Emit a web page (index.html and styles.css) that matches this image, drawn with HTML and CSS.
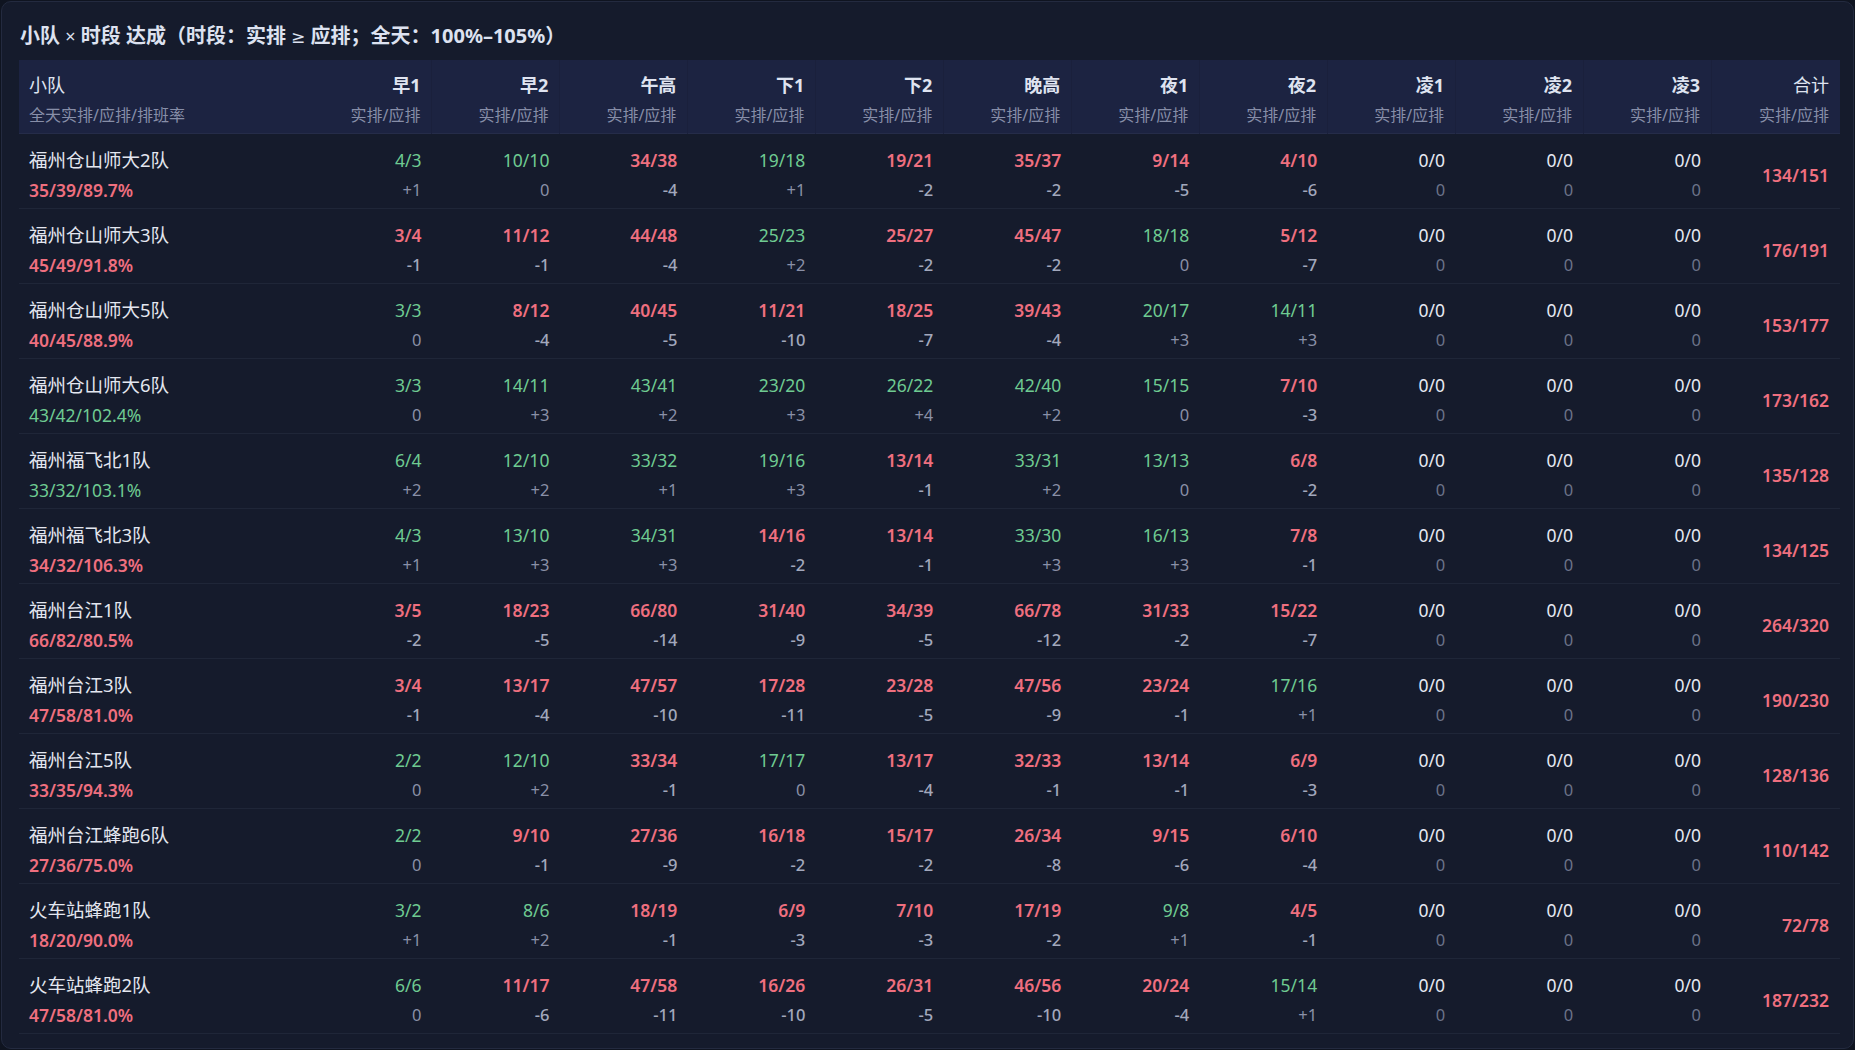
FILE: index.html
```html
<!DOCTYPE html>
<html lang="zh-CN">
<head>
<meta charset="utf-8">
<title>小队 × 时段 达成</title>
<link rel="stylesheet" href="styles.css">
</head>
<body>
<div class="card">
  <h1 class="title">小队 <span class="x">×</span> 时段 达成（时段：实排 <span class="sym">≥</span> 应排；全天：100%–105%）</h1>
  <div class="grid">
    <div class="row head">
      <div class="cell name"><div class="h1n">小队</div><div class="h2">全天实排/应排/排班率</div></div>
      <div class="cell"><div class="h1">早1</div><div class="h2">实排/应排</div></div>
      <div class="cell"><div class="h1">早2</div><div class="h2">实排/应排</div></div>
      <div class="cell"><div class="h1">午高</div><div class="h2">实排/应排</div></div>
      <div class="cell"><div class="h1">下1</div><div class="h2">实排/应排</div></div>
      <div class="cell"><div class="h1">下2</div><div class="h2">实排/应排</div></div>
      <div class="cell"><div class="h1">晚高</div><div class="h2">实排/应排</div></div>
      <div class="cell"><div class="h1">夜1</div><div class="h2">实排/应排</div></div>
      <div class="cell"><div class="h1">夜2</div><div class="h2">实排/应排</div></div>
      <div class="cell"><div class="h1">凌1</div><div class="h2">实排/应排</div></div>
      <div class="cell"><div class="h1">凌2</div><div class="h2">实排/应排</div></div>
      <div class="cell"><div class="h1">凌3</div><div class="h2">实排/应排</div></div>
      <div class="cell"><div class="h1n">合计</div><div class="h2">实排/应排</div></div>
    </div>

    <div class="row">
      <div class="cell name"><div class="n">福州仓山师大2队</div><div class="s r">35/39/89.7%</div></div>
      <div class="cell"><div class="v g">4/3</div><div class="d p">+1</div></div>
      <div class="cell"><div class="v g">10/10</div><div class="d p">0</div></div>
      <div class="cell"><div class="v r">34/38</div><div class="d m">-4</div></div>
      <div class="cell"><div class="v g">19/18</div><div class="d p">+1</div></div>
      <div class="cell"><div class="v r">19/21</div><div class="d m">-2</div></div>
      <div class="cell"><div class="v r">35/37</div><div class="d m">-2</div></div>
      <div class="cell"><div class="v r">9/14</div><div class="d m">-5</div></div>
      <div class="cell"><div class="v r">4/10</div><div class="d m">-6</div></div>
      <div class="cell"><div class="v w">0/0</div><div class="d z">0</div></div>
      <div class="cell"><div class="v w">0/0</div><div class="d z">0</div></div>
      <div class="cell"><div class="v w">0/0</div><div class="d z">0</div></div>
      <div class="cell total"><div class="v r">134/151</div></div>
    </div>

    <div class="row">
      <div class="cell name"><div class="n">福州仓山师大3队</div><div class="s r">45/49/91.8%</div></div>
      <div class="cell"><div class="v r">3/4</div><div class="d m">-1</div></div>
      <div class="cell"><div class="v r">11/12</div><div class="d m">-1</div></div>
      <div class="cell"><div class="v r">44/48</div><div class="d m">-4</div></div>
      <div class="cell"><div class="v g">25/23</div><div class="d p">+2</div></div>
      <div class="cell"><div class="v r">25/27</div><div class="d m">-2</div></div>
      <div class="cell"><div class="v r">45/47</div><div class="d m">-2</div></div>
      <div class="cell"><div class="v g">18/18</div><div class="d p">0</div></div>
      <div class="cell"><div class="v r">5/12</div><div class="d m">-7</div></div>
      <div class="cell"><div class="v w">0/0</div><div class="d z">0</div></div>
      <div class="cell"><div class="v w">0/0</div><div class="d z">0</div></div>
      <div class="cell"><div class="v w">0/0</div><div class="d z">0</div></div>
      <div class="cell total"><div class="v r">176/191</div></div>
    </div>

    <div class="row">
      <div class="cell name"><div class="n">福州仓山师大5队</div><div class="s r">40/45/88.9%</div></div>
      <div class="cell"><div class="v g">3/3</div><div class="d p">0</div></div>
      <div class="cell"><div class="v r">8/12</div><div class="d m">-4</div></div>
      <div class="cell"><div class="v r">40/45</div><div class="d m">-5</div></div>
      <div class="cell"><div class="v r">11/21</div><div class="d m">-10</div></div>
      <div class="cell"><div class="v r">18/25</div><div class="d m">-7</div></div>
      <div class="cell"><div class="v r">39/43</div><div class="d m">-4</div></div>
      <div class="cell"><div class="v g">20/17</div><div class="d p">+3</div></div>
      <div class="cell"><div class="v g">14/11</div><div class="d p">+3</div></div>
      <div class="cell"><div class="v w">0/0</div><div class="d z">0</div></div>
      <div class="cell"><div class="v w">0/0</div><div class="d z">0</div></div>
      <div class="cell"><div class="v w">0/0</div><div class="d z">0</div></div>
      <div class="cell total"><div class="v r">153/177</div></div>
    </div>

    <div class="row">
      <div class="cell name"><div class="n">福州仓山师大6队</div><div class="s g">43/42/102.4%</div></div>
      <div class="cell"><div class="v g">3/3</div><div class="d p">0</div></div>
      <div class="cell"><div class="v g">14/11</div><div class="d p">+3</div></div>
      <div class="cell"><div class="v g">43/41</div><div class="d p">+2</div></div>
      <div class="cell"><div class="v g">23/20</div><div class="d p">+3</div></div>
      <div class="cell"><div class="v g">26/22</div><div class="d p">+4</div></div>
      <div class="cell"><div class="v g">42/40</div><div class="d p">+2</div></div>
      <div class="cell"><div class="v g">15/15</div><div class="d p">0</div></div>
      <div class="cell"><div class="v r">7/10</div><div class="d m">-3</div></div>
      <div class="cell"><div class="v w">0/0</div><div class="d z">0</div></div>
      <div class="cell"><div class="v w">0/0</div><div class="d z">0</div></div>
      <div class="cell"><div class="v w">0/0</div><div class="d z">0</div></div>
      <div class="cell total"><div class="v r">173/162</div></div>
    </div>

    <div class="row">
      <div class="cell name"><div class="n">福州福飞北1队</div><div class="s g">33/32/103.1%</div></div>
      <div class="cell"><div class="v g">6/4</div><div class="d p">+2</div></div>
      <div class="cell"><div class="v g">12/10</div><div class="d p">+2</div></div>
      <div class="cell"><div class="v g">33/32</div><div class="d p">+1</div></div>
      <div class="cell"><div class="v g">19/16</div><div class="d p">+3</div></div>
      <div class="cell"><div class="v r">13/14</div><div class="d m">-1</div></div>
      <div class="cell"><div class="v g">33/31</div><div class="d p">+2</div></div>
      <div class="cell"><div class="v g">13/13</div><div class="d p">0</div></div>
      <div class="cell"><div class="v r">6/8</div><div class="d m">-2</div></div>
      <div class="cell"><div class="v w">0/0</div><div class="d z">0</div></div>
      <div class="cell"><div class="v w">0/0</div><div class="d z">0</div></div>
      <div class="cell"><div class="v w">0/0</div><div class="d z">0</div></div>
      <div class="cell total"><div class="v r">135/128</div></div>
    </div>

    <div class="row">
      <div class="cell name"><div class="n">福州福飞北3队</div><div class="s r">34/32/106.3%</div></div>
      <div class="cell"><div class="v g">4/3</div><div class="d p">+1</div></div>
      <div class="cell"><div class="v g">13/10</div><div class="d p">+3</div></div>
      <div class="cell"><div class="v g">34/31</div><div class="d p">+3</div></div>
      <div class="cell"><div class="v r">14/16</div><div class="d m">-2</div></div>
      <div class="cell"><div class="v r">13/14</div><div class="d m">-1</div></div>
      <div class="cell"><div class="v g">33/30</div><div class="d p">+3</div></div>
      <div class="cell"><div class="v g">16/13</div><div class="d p">+3</div></div>
      <div class="cell"><div class="v r">7/8</div><div class="d m">-1</div></div>
      <div class="cell"><div class="v w">0/0</div><div class="d z">0</div></div>
      <div class="cell"><div class="v w">0/0</div><div class="d z">0</div></div>
      <div class="cell"><div class="v w">0/0</div><div class="d z">0</div></div>
      <div class="cell total"><div class="v r">134/125</div></div>
    </div>

    <div class="row">
      <div class="cell name"><div class="n">福州台江1队</div><div class="s r">66/82/80.5%</div></div>
      <div class="cell"><div class="v r">3/5</div><div class="d m">-2</div></div>
      <div class="cell"><div class="v r">18/23</div><div class="d m">-5</div></div>
      <div class="cell"><div class="v r">66/80</div><div class="d m">-14</div></div>
      <div class="cell"><div class="v r">31/40</div><div class="d m">-9</div></div>
      <div class="cell"><div class="v r">34/39</div><div class="d m">-5</div></div>
      <div class="cell"><div class="v r">66/78</div><div class="d m">-12</div></div>
      <div class="cell"><div class="v r">31/33</div><div class="d m">-2</div></div>
      <div class="cell"><div class="v r">15/22</div><div class="d m">-7</div></div>
      <div class="cell"><div class="v w">0/0</div><div class="d z">0</div></div>
      <div class="cell"><div class="v w">0/0</div><div class="d z">0</div></div>
      <div class="cell"><div class="v w">0/0</div><div class="d z">0</div></div>
      <div class="cell total"><div class="v r">264/320</div></div>
    </div>

    <div class="row">
      <div class="cell name"><div class="n">福州台江3队</div><div class="s r">47/58/81.0%</div></div>
      <div class="cell"><div class="v r">3/4</div><div class="d m">-1</div></div>
      <div class="cell"><div class="v r">13/17</div><div class="d m">-4</div></div>
      <div class="cell"><div class="v r">47/57</div><div class="d m">-10</div></div>
      <div class="cell"><div class="v r">17/28</div><div class="d m">-11</div></div>
      <div class="cell"><div class="v r">23/28</div><div class="d m">-5</div></div>
      <div class="cell"><div class="v r">47/56</div><div class="d m">-9</div></div>
      <div class="cell"><div class="v r">23/24</div><div class="d m">-1</div></div>
      <div class="cell"><div class="v g">17/16</div><div class="d p">+1</div></div>
      <div class="cell"><div class="v w">0/0</div><div class="d z">0</div></div>
      <div class="cell"><div class="v w">0/0</div><div class="d z">0</div></div>
      <div class="cell"><div class="v w">0/0</div><div class="d z">0</div></div>
      <div class="cell total"><div class="v r">190/230</div></div>
    </div>

    <div class="row">
      <div class="cell name"><div class="n">福州台江5队</div><div class="s r">33/35/94.3%</div></div>
      <div class="cell"><div class="v g">2/2</div><div class="d p">0</div></div>
      <div class="cell"><div class="v g">12/10</div><div class="d p">+2</div></div>
      <div class="cell"><div class="v r">33/34</div><div class="d m">-1</div></div>
      <div class="cell"><div class="v g">17/17</div><div class="d p">0</div></div>
      <div class="cell"><div class="v r">13/17</div><div class="d m">-4</div></div>
      <div class="cell"><div class="v r">32/33</div><div class="d m">-1</div></div>
      <div class="cell"><div class="v r">13/14</div><div class="d m">-1</div></div>
      <div class="cell"><div class="v r">6/9</div><div class="d m">-3</div></div>
      <div class="cell"><div class="v w">0/0</div><div class="d z">0</div></div>
      <div class="cell"><div class="v w">0/0</div><div class="d z">0</div></div>
      <div class="cell"><div class="v w">0/0</div><div class="d z">0</div></div>
      <div class="cell total"><div class="v r">128/136</div></div>
    </div>

    <div class="row">
      <div class="cell name"><div class="n">福州台江蜂跑6队</div><div class="s r">27/36/75.0%</div></div>
      <div class="cell"><div class="v g">2/2</div><div class="d p">0</div></div>
      <div class="cell"><div class="v r">9/10</div><div class="d m">-1</div></div>
      <div class="cell"><div class="v r">27/36</div><div class="d m">-9</div></div>
      <div class="cell"><div class="v r">16/18</div><div class="d m">-2</div></div>
      <div class="cell"><div class="v r">15/17</div><div class="d m">-2</div></div>
      <div class="cell"><div class="v r">26/34</div><div class="d m">-8</div></div>
      <div class="cell"><div class="v r">9/15</div><div class="d m">-6</div></div>
      <div class="cell"><div class="v r">6/10</div><div class="d m">-4</div></div>
      <div class="cell"><div class="v w">0/0</div><div class="d z">0</div></div>
      <div class="cell"><div class="v w">0/0</div><div class="d z">0</div></div>
      <div class="cell"><div class="v w">0/0</div><div class="d z">0</div></div>
      <div class="cell total"><div class="v r">110/142</div></div>
    </div>

    <div class="row">
      <div class="cell name"><div class="n">火车站蜂跑1队</div><div class="s r">18/20/90.0%</div></div>
      <div class="cell"><div class="v g">3/2</div><div class="d p">+1</div></div>
      <div class="cell"><div class="v g">8/6</div><div class="d p">+2</div></div>
      <div class="cell"><div class="v r">18/19</div><div class="d m">-1</div></div>
      <div class="cell"><div class="v r">6/9</div><div class="d m">-3</div></div>
      <div class="cell"><div class="v r">7/10</div><div class="d m">-3</div></div>
      <div class="cell"><div class="v r">17/19</div><div class="d m">-2</div></div>
      <div class="cell"><div class="v g">9/8</div><div class="d p">+1</div></div>
      <div class="cell"><div class="v r">4/5</div><div class="d m">-1</div></div>
      <div class="cell"><div class="v w">0/0</div><div class="d z">0</div></div>
      <div class="cell"><div class="v w">0/0</div><div class="d z">0</div></div>
      <div class="cell"><div class="v w">0/0</div><div class="d z">0</div></div>
      <div class="cell total"><div class="v r">72/78</div></div>
    </div>

    <div class="row">
      <div class="cell name"><div class="n">火车站蜂跑2队</div><div class="s r">47/58/81.0%</div></div>
      <div class="cell"><div class="v g">6/6</div><div class="d p">0</div></div>
      <div class="cell"><div class="v r">11/17</div><div class="d m">-6</div></div>
      <div class="cell"><div class="v r">47/58</div><div class="d m">-11</div></div>
      <div class="cell"><div class="v r">16/26</div><div class="d m">-10</div></div>
      <div class="cell"><div class="v r">26/31</div><div class="d m">-5</div></div>
      <div class="cell"><div class="v r">46/56</div><div class="d m">-10</div></div>
      <div class="cell"><div class="v r">20/24</div><div class="d m">-4</div></div>
      <div class="cell"><div class="v g">15/14</div><div class="d p">+1</div></div>
      <div class="cell"><div class="v w">0/0</div><div class="d z">0</div></div>
      <div class="cell"><div class="v w">0/0</div><div class="d z">0</div></div>
      <div class="cell"><div class="v w">0/0</div><div class="d z">0</div></div>
      <div class="cell total"><div class="v r">187/232</div></div>
    </div>
  </div>
</div>
</body>
</html>
```

FILE: styles.css
```css
html, body {
  margin: 0;
  padding: 0;
  background: #0f1420;
}

body {
  font-family: "Noto Sans", "Noto Sans CJK SC", sans-serif;
  color: #e4e7f0;
}

.card {
  margin: 1px;
  width: 1853px;
  height: 1048px;
  box-sizing: border-box;
  border: 1px solid #232a3f;
  border-radius: 10px;
  background: #151b2c;
  padding: 20px 13px 0 17px;
  overflow: hidden;
}

.title {
  margin: 0 0 9px 1px;
  font-size: 20px;
  line-height: 28px;
  font-weight: 700;
  color: #dde2f0;
  white-space: nowrap;
}

.title .x {
  font-weight: 400;
  font-size: 18px;
}

.title .sym {
  font-family: "DejaVu Sans", sans-serif;
  font-weight: 400;
  font-size: 17px;
}

.grid {
  display: flex;
  flex-direction: column;
}

.row {
  display: grid;
  grid-template-columns: 285.5px repeat(12, 1fr);
  height: 75px;
  box-sizing: border-box;
  border-bottom: 1px solid #1f2638;
}

.row.head {
  height: 74px;
  background: #1c2341;
  border-bottom: 1px solid #252c49;
}

.cell {
  padding: 12px 11px 5px 10px;
  text-align: right;
  white-space: nowrap;
  min-width: 0;
}

.head .cell {
  padding-top: 11px;
  border-right: 1px solid #1a203c;
}

.head .cell:last-child {
  border-right: none;
}

.cell.name {
  text-align: left;
}

.head .cell.name {
  border-right: none;
}

.h1, .h1n {
  font-size: 18px;
  line-height: 28px;
  color: #dfe3f0;
}

.h1 {
  font-weight: 700;
}

.h1n {
  font-weight: 400;
}

.h2 {
  margin-top: 2px;
  font-size: 16px;
  line-height: 28px;
  color: #878ea8;
}

.n {
  font-size: 18.5px;
  line-height: 28px;
  color: #e4e7f0;
}

.s {
  margin-top: 2px;
  font-size: 17.5px;
  line-height: 28px;
}

.v {
  font-size: 17.5px;
  line-height: 28px;
}

.d {
  margin-top: 2px;
  font-size: 16.5px;
  line-height: 28px;
}

.g {
  color: #6fcb92;
  font-weight: 400;
}

.r {
  color: #ef6f7f;
  font-weight: 600;
}

.w {
  color: #e6e9f2;
  font-weight: 400;
}

.d.p {
  color: #8a90a7;
}

.d.m {
  color: #a2a8bc;
  font-weight: 500;
}

.d.z {
  color: #6c7389;
}

.cell.total {
  display: flex;
  align-items: center;
  justify-content: flex-end;
}
```
